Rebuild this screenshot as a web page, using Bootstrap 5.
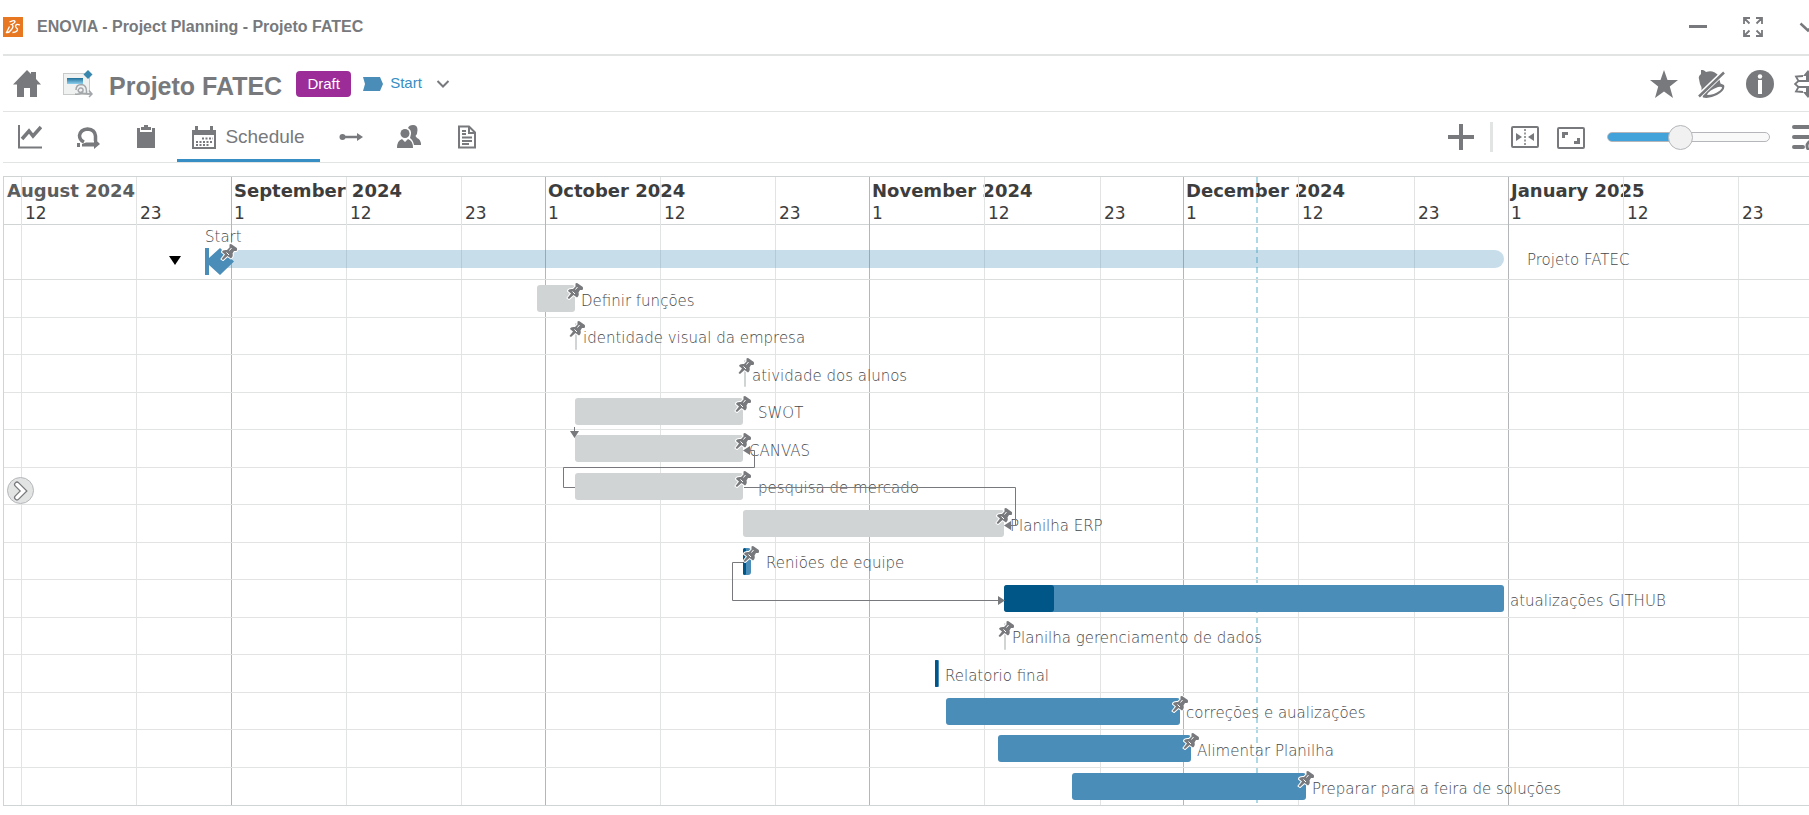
<!DOCTYPE html>
<html lang="en">
<head>
<meta charset="utf-8">
<meta name="viewport" content="width=device-width, initial-scale=1">
<title>ENOVIA - Project Planning - Projeto FATEC</title>
<link href="https://cdn.jsdelivr.net/npm/bootstrap@5.3.0/dist/css/bootstrap.min.css" rel="stylesheet">
<style>
  :root { --ink: #77797c; --line: #e2e4e3; --month: #b4b6ba; --blue: #368ec4; --task: #4a8db8; --done: #005686; --idle: #d1d4d4; }
  body { font-family: "Liberation Sans", Arial, sans-serif; color: var(--ink); background: #fff; overflow-x: hidden; }
  svg { display: block; flex: none; }
  .shell { padding-left: 3px; overflow: hidden; }
  .titlebar { height: 56px; border-bottom: 2px solid var(--line); }
  .objectbar { height: 56px; border-bottom: 1px solid var(--line); }
  .toolbar { height: 51px; border-bottom: 1px solid var(--line); }
  .ib { border: 0; background: none; padding: 0; color: inherit; display: flex; align-items: center; justify-content: center; flex: none; }
  .app-name { margin-left: 14px; font-size: 16px; font-weight: 700; }
  .win { gap: 35px; margin-right: -9px; }
  .acts { gap: 20px; margin-right: -13px; }
  .tools { gap: 18px; margin-right: -11px; }
  .add { margin-right: -2px; }
  .home { margin: 0 22px 0 10px; }
  .obj-title { font-size: 25px; font-weight: 700; margin: 4px 0 0 16px; line-height: 28px; }
  .state { background: #9b2c98; color: #fff; font-size: 15px; font-weight: 400; line-height: 26px; padding: 0; width: 55px; border-radius: 4px; margin-left: 14px; }
  .phase { color: var(--blue); font-size: 15px; text-decoration: none; margin-left: 12px; gap: 7px; }
  .more { margin-left: 14px; }
  .tabs { gap: 4px; }
  .tabs .ib { width: 54px; height: 50px; }
  .tabs .ib.active { width: 143px; gap: 9px; font-size: 19px; border-bottom: 3px solid var(--blue); padding-top: 4px; }
  .sep { width: 3px; height: 30px; background: var(--line); }
  .zoomer { -webkit-appearance: none; appearance: none; width: 163px; height: 10px; margin: 0 4px; border: 1px solid var(--month); border-radius: 5px; background: linear-gradient(to right, #42a2da 45%, #f9f9f9 45%); }
  .zoomer::-webkit-slider-thumb { -webkit-appearance: none; width: 25px; height: 25px; border-radius: 50%; background: #f1f1f1; border: 1px solid var(--month); }

  .gantt { margin-top: 13px; border: 1px solid #d1d4d4; border-right: 0; font-family: "DejaVu Sans", Verdana, sans-serif; position: relative; }
  .axis { position: absolute; inset: 0; overflow: hidden; color: #3d3d3d; }
  .tick { flex: none; border-left: 1px solid var(--line); white-space: nowrap; padding-left: 3px; line-height: 22px; font-size: 17px; padding-top: 25px; }
  .tick.first { border-left-color: var(--month); padding-top: 3px; padding-left: 2px; }
  .tick.edge { border: 0; padding-top: 3px; color: #5b5d5e; }
  .tick b { display: block; font-size: 18px; }
  .today { position: absolute; top: 0; bottom: 0; left: 1252px; width: 2px; background: repeating-linear-gradient(to bottom, #add8e6 0 6px, transparent 6px 10px); }
  .axis-head { height: 48px; border-bottom: 1px solid #d1d4d4; }
  .summary { height: 55px; border-bottom: 1px solid #dcdedd; position: relative; font-weight: 200; line-height: 20px; }
  .tasks { display: grid; grid-auto-rows: 1fr; height: 525px; position: relative; }
  .task { border-bottom: 1px solid var(--line); display: flex; align-items: center; padding-top: 1px; white-space: nowrap; font-size: 15px; font-weight: 200; min-height: 0; }
  .task:last-child { border-bottom: 0; }
  .tbar { height: 27px; flex: none; background: var(--idle); border-radius: 3px; position: relative; }
  .tbar.slim { border-radius: 1px; }
  .tbar.run { background: var(--task); }
  .tbar i { display: block; height: 100%; background: var(--done); border-radius: 3px; }
  .tbar.slim i { border-radius: 1px; }
  .pin { position: absolute; right: -9px; top: -3px; }
  .tname, .sum-start, .sum-name { color: #45474a; }
  .tname { margin-left: 6px; padding-top: 4px; }
  .tname.far { margin-left: 15px; }
  .sum-bar { position: absolute; left: 216px; width: 1284px; top: 25px; height: 18px; border-radius: 0 9px 9px 0; background: #4a8db84d; }
  .sum-start { position: absolute; left: 201px; top: 2px; font-size: 15px; }
  .sum-name { position: absolute; left: 1523px; top: 25px; font-size: 15px; }
  .sum-mark { position: absolute; left: 201px; top: 18px; }
  .sum-toggle { position: absolute; left: 165px; top: 31px; }
  .links { position: absolute; left: 0; top: 0; overflow: visible; pointer-events: none; }
  .drawer { position: absolute; left: 3px; top: 300px; width: 27px; height: 27px; border-radius: 50%; background: var(--line); border: 1px solid var(--month); }
</style>
</head>
<body>
<svg width="0" height="0" class="position-absolute" aria-hidden="true">
  <symbol id="pin" viewBox="0 0 18 18">
    <path d="M9.500 1.500Q10.500 .5 11.500 1.200L16.800 5Q17.500 6.500 16.500 8L14 8L12.500 10.500Q13.500 13.500 11 15.500L7.500 13L3 17L1.500 16L5 11.500L2 9Q2.500 6.500 7 7L9.500 4.500Z" fill="#77797c" stroke="#fff" stroke-width="2" stroke-linejoin="round" paint-order="stroke"/>
    <path d="M11.500 5L9.500 7.500M6.500 9.500L9 12" stroke="#fff" stroke-width="1" fill="none"/>
  </symbol>
</svg>

<div class="shell">
  <header class="titlebar d-flex align-items-center">
    <svg width="20" height="20" viewBox="0 0 20 20"><rect width="20" height="20" fill="#e87722"/><path d="M6.500 5Q11.500 2.500 12 4.500Q12 6 8.500 7.500Q11.500 8.500 8.500 12.500Q6 16 3.500 15.500L6.500 9.500M17 8Q13 6.500 12.500 9Q12.500 10.500 14.500 12Q15 15 9.500 15.500" fill="none" stroke="#fff" stroke-width="1.300"/></svg>
    <span class="app-name">ENOVIA - Project Planning - Projeto FATEC</span>
    <div class="win d-flex align-items-center ms-auto">
      <button class="ib" aria-label="Minimize"><svg width="20" height="20" viewBox="0 0 20 20"><path d="M1 9.500H19" stroke="#77797c" stroke-width="3"/></svg></button>
      <button class="ib" aria-label="Full screen"><svg width="20" height="20" viewBox="0 0 20 20" fill="none" stroke="#77797c" stroke-width="1.800"><path d="M1 7V1H7M1.500 1.500L6.500 6.500M13 1H19V7M18.500 1.500L13.500 6.500M1 13V19H7M1.500 18.500L6.500 13.500M13 19H19V13M18.500 18.500L13.500 13.500"/></svg></button>
      <button class="ib" aria-label="More"><svg width="20" height="20" viewBox="0 0 20 20"><path d="M2.500 6.500L10 13.500L17.500 6.500" fill="none" stroke="#77797c" stroke-width="2.500"/></svg></button>
    </div>
  </header>

  <div class="objectbar d-flex align-items-center">
    <button class="ib home" aria-label="Home"><svg width="28" height="28" viewBox="0 0 28 28"><path d="M14 0L18 4V2H23V9L28 14.500H24V27H17V18H11V27H4V14.500H0Z" fill="#77797c"/></svg></button>
    <svg width="30" height="28" viewBox="0 0 30 28"><defs><linearGradient id="g1" x1="0" y1="0" x2="0" y2="1"><stop stop-color="#1f6f99"/><stop offset="1" stop-color="#8fd0ee"/></linearGradient></defs><rect x=".5" y="3.500" width="26" height="21" fill="#f0f1f1" stroke="#c9cbcb"/><rect x="4" y="8" width="16" height="6" fill="url(#g1)"/><path d="M12 24Q17 25 20 21Q20.500 17.500 17 18Q14 20 16 22Q20 24 29 24M13 20Q13 14.500 18.500 14.500Q24 15 23.500 23M26 20.500L29 24L26 27" fill="none" stroke="#a4a7aa" stroke-width="1.500"/><path d="M25 0L29.500 4.500L25 9L20.500 4.500Z" fill="#3787ae"/></svg>
    <h1 class="obj-title">Projeto FATEC</h1>
    <span class="badge state">Draft</span>
    <a class="phase d-flex align-items-center" href="#"><svg width="20" height="14" viewBox="0 0 20 14"><path d="M0 0H17L20 7L17 14H0L2 7Z" fill="#4a8db8"/></svg>Start</a>
    <button class="ib more" aria-label="Change state"><svg width="14" height="10" viewBox="0 0 14 10"><path d="M1.500 2L7 7.500L12.500 2" fill="none" stroke="#77797c" stroke-width="2"/></svg></button>
    <div class="acts d-flex align-items-center ms-auto">
      <button class="ib" aria-label="Favorite"><svg width="28" height="28" viewBox="0 0 28 28"><path d="M14 0L17.500 10H28L19.800 16.500L23 28L14 21.500L5 28L8.200 16.500L0 10H10.500Z" fill="#77797c"/></svg></button>
      <button class="ib" aria-label="Mute notifications"><svg width="28" height="28" viewBox="0 0 28 28"><path d="M3 0Q6-.5 8 2Q15-.5 20 5L3 22Q4.500 18 2 14L1 9Q0 6 3 4ZM21 8L22.500 13.500L26 15Q28 20 19 25Q11 29 5 27.500Q4 26 6 24.500Z" fill="#77797c"/><path d="M9 25Q11 20 20 17Q27 16 22 20.500Q16 25 9 25Z" fill="#fff"/><path d="M1 26L26 2" stroke="#fff" stroke-width="5"/><path d="M1 26.500L26 2.500" stroke="#77797c" stroke-width="2.500"/></svg></button>
      <button class="ib" aria-label="Information"><svg width="28" height="28" viewBox="0 0 28 28"><circle cx="14" cy="14" r="14" fill="#77797c"/><circle cx="14" cy="6.500" r="2.200" fill="#fff"/><rect x="12" y="10" width="4" height="14" fill="#fff"/></svg></button>
      <button class="ib" aria-label="Share"><svg width="28" height="28" viewBox="0 0 28 28"><path d="M14 0L19 6H16V10H12V6H9ZM14 28L19 22H16V18H12V22H9Z" fill="#77797c"/><path d="M9 6L2 6.500L4.500 11L1 14L4.500 17L2 21.500L9 22M19 6L26 6.500L23.500 11L27 14L23.500 17L26 21.500L19 22M4.500 11H23.500M4.500 17H23.500" fill="none" stroke="#77797c" stroke-width="1.800"/></svg></button>
    </div>
  </div>

  <div class="toolbar d-flex align-items-center">
    <nav class="tabs d-flex" aria-label="Views">
      <button class="ib" aria-label="Dashboard"><svg width="24" height="24" viewBox="0 0 24 24"><path d="M1 0V22.500H24" fill="none" stroke="#77797c" stroke-width="2"/><path d="M4 14L11 6L15 11L23 2" fill="none" stroke="#77797c" stroke-width="3.500"/></svg></button>
      <button class="ib" aria-label="Process"><svg width="24" height="24" viewBox="0 0 24 24"><path d="M8 17Q3.500 15 3.500 10.500Q4.500 4.500 11.500 4Q19 4.500 19.500 11V16" fill="none" stroke="#77797c" stroke-width="3.500"/><path d="M1 18H4V22H1ZM10 17.500H18V13L24 19L18 24V21.500H6V19Z" fill="#77797c"/></svg></button>
      <button class="ib" aria-label="Assignments"><svg width="18" height="24" viewBox="0 0 18 24"><path d="M0 3H3V7H15V3H18V23H0ZM4 2H7V0H11V2H14V5H4Z" fill="#77797c"/></svg></button>
      <button class="ib active"><svg width="24" height="24" viewBox="0 0 24 24"><path d="M3 0H6V4H18V0H21V4H24V23H0V4H3ZM2 9V21H22V9Z" fill="#77797c" fill-rule="evenodd"/><path d="M10 12.500H21M4 16H21M4 19H18" stroke="#77797c" stroke-width="2" stroke-dasharray="2 1.500"/></svg>Schedule</button>
      <button class="ib" aria-label="Dependencies"><svg width="24" height="10" viewBox="0 0 24 10"><circle cx="3.500" cy="5" r="3" fill="#77797c"/><path d="M4 5H20" stroke="#77797c" stroke-width="2.500"/><path d="M18 1L24 5L18 9Z" fill="#77797c"/></svg></button>
      <button class="ib" aria-label="Members"><svg width="24" height="24" viewBox="0 0 24 24" fill="#77797c"><path d="M11 3Q12 0 16 0Q20.500 0 20.500 5Q20.500 9 18.500 11L20 13Q24 14.500 24 20H17Q16 15 13 13L14 9Q14.500 5 11 3Z"/><circle cx="8" cy="8.500" r="4.500"/><path d="M0 23Q0 15.500 5 14L8 17L11 14Q16 15.500 16 23Z"/></svg></button>
      <button class="ib" aria-label="Documents"><svg width="18" height="24" viewBox="0 0 18 24"><path d="M1 1.500H11L17 7.500V22.500H1ZM11 1.500V8H17M4 6H8M4 9H8M4 12.500H14M4 16H14M4 19H11" fill="none" stroke="#77797c" stroke-width="2"/></svg></button>
    </nav>
    <div class="tools d-flex align-items-center ms-auto">
      <button class="ib add" aria-label="Add"><svg width="26" height="26" viewBox="0 0 26 26"><path d="M13 0V26M0 13H26" stroke="#77797c" stroke-width="4"/></svg></button>
      <span class="sep"></span>
      <button class="ib" aria-label="Center on today"><svg width="28" height="24" viewBox="0 0 28 24"><rect x="1" y="2" width="26" height="20" rx="1" fill="none" stroke="#77797c" stroke-width="2"/><path d="M14 4V21" stroke="#77797c" stroke-width="1.500" stroke-dasharray="2 1.500"/><path d="M5 8L11 12L5 16ZM23 8L17 12L23 16Z" fill="#77797c"/></svg></button>
      <button class="ib" aria-label="Fit to view"><svg width="28" height="24" viewBox="0 0 28 24"><rect x="1" y="3" width="26" height="20" rx="1" fill="none" stroke="#77797c" stroke-width="2"/><path d="M6.500 13V8.500H11M17 17.500H21.500V13" fill="none" stroke="#77797c" stroke-width="3"/></svg></button>
      <input class="zoomer" type="range" min="0" max="100" value="44" aria-label="Zoom">
      <button class="ib" aria-label="Options"><svg width="28" height="26" viewBox="0 0 28 26"><path d="M2 3H28M2 13H28M2 23H11" stroke="#77797c" stroke-width="4" stroke-linecap="round"/><circle cx="20" cy="22" r="5" fill="none" stroke="#77797c" stroke-width="3"/></svg></button>
    </div>
  </div>

  <main class="gantt">
    <div class="axis d-flex">
      <div class="tick edge" style="width:17px"><b>August 2024</b></div>
      <div class="tick" style="width:115px">12</div>
      <div class="tick" style="width:95px">23</div>
      <div class="tick first" style="width:115px"><b>September 2024</b>1</div>
      <div class="tick" style="width:115px">12</div>
      <div class="tick" style="width:84px">23</div>
      <div class="tick first" style="width:115px"><b>October 2024</b>1</div>
      <div class="tick" style="width:115px">12</div>
      <div class="tick" style="width:94px">23</div>
      <div class="tick first" style="width:115px"><b>November 2024</b>1</div>
      <div class="tick" style="width:116px">12</div>
      <div class="tick" style="width:83px">23</div>
      <div class="tick first" style="width:115px"><b>December 2024</b>1</div>
      <div class="tick" style="width:116px">12</div>
      <div class="tick" style="width:94px">23</div>
      <div class="tick first" style="width:115px"><b>January 2025</b>1</div>
      <div class="tick" style="width:115px">12</div>
      <div class="tick" style="width:115px">23</div>
      <div class="today"></div>
    </div>
    <div class="axis-head"></div>

    <div class="summary">
      <span class="sum-start">Start</span>
      <button class="ib sum-toggle" aria-label="Collapse"><svg width="12" height="9" viewBox="0 0 12 9"><path d="M0 0H12L6 9Z" fill="#000"/></svg></button>
      <div class="sum-bar"></div>
      <svg class="sum-mark" width="36" height="34" viewBox="0 0 36 34"><path d="M0 5H4V15L15 5L29 18.500L15 32L4 22V32H0Z" fill="#4a8db8"/><use href="#pin" x="15" y="0" width="18" height="18"/></svg>
      <span class="sum-name">Projeto FATEC</span>
    </div>

    <div class="tasks">
      <div class="task"><div class="tbar" style="margin-left:533px;width:38px"><svg class="pin" width="18" height="18"><use href="#pin"/></svg></div><span class="tname">Definir funções</span></div>
      <div class="task"><div class="tbar slim" style="margin-left:571px;width:2px"><svg class="pin" width="18" height="18"><use href="#pin"/></svg></div><span class="tname">identidade visual da empresa</span></div>
      <div class="task"><div class="tbar slim" style="margin-left:740px;width:2px"><svg class="pin" width="18" height="18"><use href="#pin"/></svg></div><span class="tname">atividade dos alunos</span></div>
      <div class="task"><div class="tbar" style="margin-left:571px;width:168px"><svg class="pin" width="18" height="18"><use href="#pin"/></svg></div><span class="tname far">SWOT</span></div>
      <div class="task"><div class="tbar" style="margin-left:571px;width:168px"><svg class="pin" width="18" height="18"><use href="#pin"/></svg></div><span class="tname">CANVAS</span></div>
      <div class="task"><div class="tbar" style="margin-left:571px;width:168px"><svg class="pin" width="18" height="18"><use href="#pin"/></svg></div><span class="tname far">pesquisa de mercado</span></div>
      <div class="task"><div class="tbar" style="margin-left:739px;width:261px"><svg class="pin" width="18" height="18"><use href="#pin"/></svg></div><span class="tname">Planilha ERP</span></div>
      <div class="task"><div class="tbar run" style="margin-left:739px;width:8px"><i style="width:38%"></i><svg class="pin" width="18" height="18"><use href="#pin"/></svg></div><span class="tname far">Reniões de equipe</span></div>
      <div class="task"><div class="tbar run" style="margin-left:1000px;width:500px"><i style="width:10%"></i></div><span class="tname">atualizações GITHUB</span></div>
      <div class="task"><div class="tbar slim" style="margin-left:1000px;width:2px"><svg class="pin" width="18" height="18"><use href="#pin"/></svg></div><span class="tname">Planilha gerenciamento de dados</span></div>
      <div class="task"><div class="tbar run slim" style="margin-left:931px;width:4px"><i style="width:75%"></i></div><span class="tname">Relatorio final</span></div>
      <div class="task"><div class="tbar run" style="margin-left:942px;width:234px"><svg class="pin" width="18" height="18"><use href="#pin"/></svg></div><span class="tname">correções e aualizações</span></div>
      <div class="task"><div class="tbar run" style="margin-left:994px;width:193px"><svg class="pin" width="18" height="18"><use href="#pin"/></svg></div><span class="tname">Alimentar Planilha</span></div>
      <div class="task"><div class="tbar run" style="margin-left:1068px;width:234px"><svg class="pin" width="18" height="18"><use href="#pin"/></svg></div><span class="tname">Preparar para a feira de soluções</span></div>
    </div>

    <!-- dependency links between tasks -->
    <svg class="links" width="1100" height="440" viewBox="4 177 1100 440" fill="none" stroke="#77797c">
      <path d="M574.500 427V432M575 487.500H563.500V467.500H754.500V450.500H749M744 487.500H1015.500V525.500H1010M743 562.500H732.500V600.500H999"/>
      <path d="M570 431H579L574.500 438ZM743 450.500L750 446V455ZM1004 525.500L1011 521V530ZM1005 600.500L998 596V605Z" fill="#77797c" stroke="none"/>
    </svg>
    <button class="ib drawer" aria-label="Open panel"><svg width="16" height="20" viewBox="0 0 16 20"><path d="M4 3.500L10.500 10L4 16.500" fill="none" stroke="#77797c" stroke-width="6" stroke-linecap="round"/><path d="M4 3.500L10.500 10L4 16.500" fill="none" stroke="#fff" stroke-width="3.500" stroke-linecap="round"/></svg></button>
  </main>
</div>
<script src="https://cdn.jsdelivr.net/npm/bootstrap@5.3.0/dist/js/bootstrap.bundle.min.js"></script>
</body>
</html>
